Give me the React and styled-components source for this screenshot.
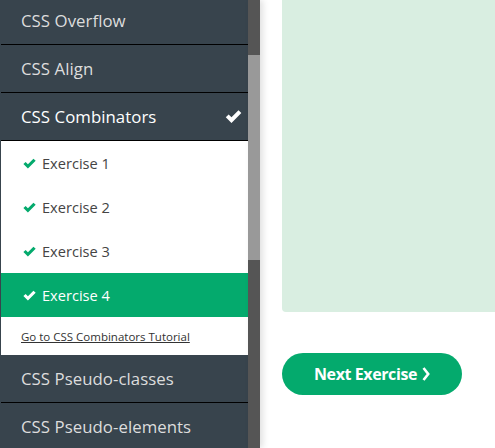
import React from "react";
import styled, { createGlobalStyle } from "styled-components";

const GlobalStyle = createGlobalStyle`
  html, body {
    margin: 0;
    padding: 0;
    background: #ffffff;
    overflow: hidden;
  }
  body {
    font-family: "Open Sans", "Liberation Sans", sans-serif;
  }
`;

const Page = styled.div`
  display: flex;
  width: 495px;
  height: 448px;
  overflow: hidden;
`;

const Sidebar = styled.nav`
  width: 248px;
  flex-shrink: 0;
  background-color: #38444d;
  padding-left: 1px;
  box-sizing: border-box;
  overflow: hidden;
`;

const List = styled.div`
  margin-top: -3px;
`;

const Topic = styled.div`
  height: 47px;
  display: flex;
  align-items: center;
  justify-content: space-between;
  padding: 0 5px 0 20px;
  border-bottom: 1px solid ${(p) => (p.$last ? "transparent" : "#000")};
  color: ${(p) => (p.$active ? "#ffffff" : "#dddddd")};
  font-size: 16.8px;
  letter-spacing: 0.05px;
`;

const Submenu = styled.div`
  background: #ffffff;
  border-top: 1px solid #000;
  margin-top: -1px;
`;

const ExerciseRow = styled.div`
  height: 44px;
  display: flex;
  align-items: center;
  gap: 5px;
  padding-left: 21px;
  font-size: 14.6px;
  color: ${(p) => (p.$current ? "#ffffff" : "#444")};
  background: ${(p) => (p.$current ? "#04aa6d" : "transparent")};
`;

const TutorialLink = styled.a`
  display: flex;
  align-items: center;
  height: 38px;
  padding-left: 20px;
  font-size: 11.5px;
  color: #333;
  text-decoration: underline;
`;

const Scrollbar = styled.div`
  width: 12px;
  flex-shrink: 0;
  background: #555555;
  box-shadow: 3px 0 6px rgba(0, 0, 0, 0.12);
  position: relative;
  z-index: 1;
  padding-top: 55px;
  box-sizing: border-box;
`;

const Thumb = styled.div`
  height: 205px;
  background: #999999;
`;

const Main = styled.main`
  flex: 1;
  padding-left: 22px;
  display: flex;
  flex-direction: column;
  align-items: flex-start;
`;

const Panel = styled.div`
  align-self: stretch;
  height: 312px;
  background: #d9eee1;
  border-bottom-left-radius: 4px;
`;

const NextButton = styled.button`
  margin-top: 41px;
  width: 180px;
  height: 42px;
  border: none;
  border-radius: 21px;
  background: #04aa6d;
  color: #ffffff;
  font-family: "Open Sans", "Liberation Sans", sans-serif;
  font-weight: 700;
  font-size: 16px;
  display: flex;
  align-items: center;
  justify-content: center;
  gap: 5px;
  letter-spacing: -0.4px;
  padding: 0;
`;

const Check = ({ color = "#04aa6d", size = 15 }) => (
  <svg width={size} height={size} viewBox="0 0 16 16" aria-hidden="true">
    <path
      d="M1.5 8.6 L3.9 6.3 L6.3 8.7 L12.2 2.8 L14.6 5.1 L6.3 13.4 Z"
      fill={color}
    />
  </svg>
);

const Chevron = () => (
  <svg width="8" height="14" viewBox="0 0 8 14" aria-hidden="true">
    <path d="M1.5 1 L6.2 7 L1.5 13" stroke="#fff" strokeWidth="2.6" fill="none" />
  </svg>
);

const exercises = ["Exercise 1", "Exercise 2", "Exercise 3", "Exercise 4"];

export default function App() {
  return (
    <>
      <GlobalStyle />
      <Page>
        <Sidebar>
          <List>
            <Topic>CSS Overflow</Topic>
            <Topic>CSS Align</Topic>
            <Topic $active>
              CSS Combinators
              <Check color="#ffffff" size={19} />
            </Topic>
            <Submenu>
              {exercises.map((ex, i) => (
                <ExerciseRow key={ex} $current={i === exercises.length - 1}>
                  <Check color={i === exercises.length - 1 ? "#ffffff" : "#04aa6d"} />
                  {ex}
                </ExerciseRow>
              ))}
              <TutorialLink href="#">Go to CSS Combinators Tutorial</TutorialLink>
            </Submenu>
            <Topic>CSS Pseudo-classes</Topic>
            <Topic $last>CSS Pseudo-elements</Topic>
          </List>
        </Sidebar>
        <Scrollbar>
          <Thumb />
        </Scrollbar>
        <Main>
          <Panel />
          <NextButton>
            Next Exercise <Chevron />
          </NextButton>
        </Main>
      </Page>
    </>
  );
}
